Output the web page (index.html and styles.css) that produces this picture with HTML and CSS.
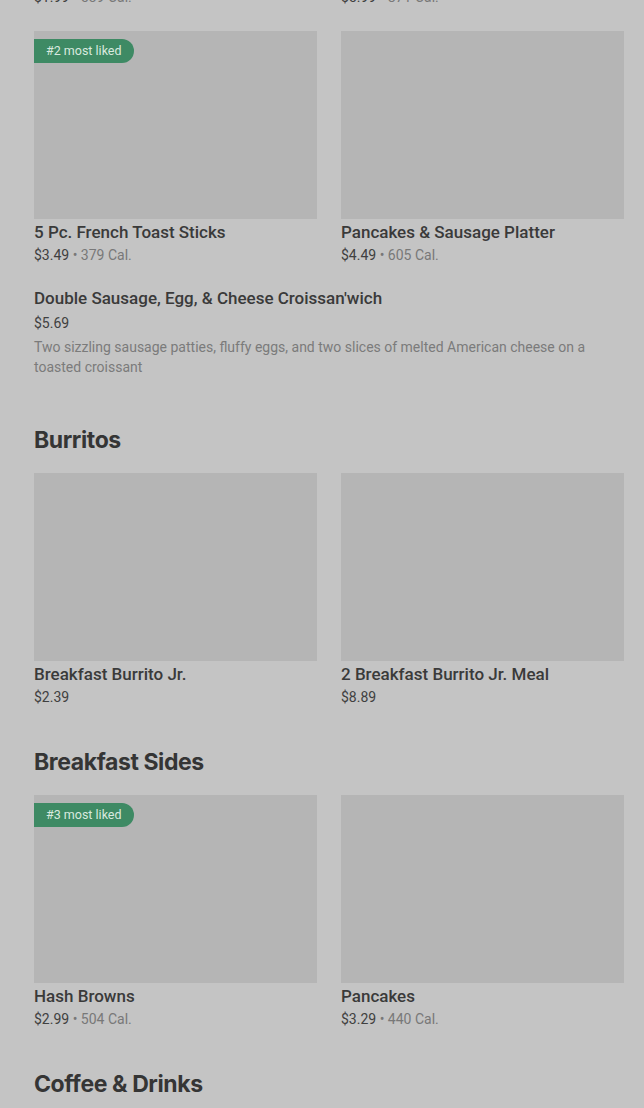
FILE: index.html
```html
<!DOCTYPE html>
<html lang="en">
<head>
    <meta charset="UTF-8">
    <meta name="viewport" content="width=device-width, initial-scale=1.0">
    <title>Breakfast Menu</title>
    <link rel="stylesheet" href="styles.css">
</head>
<body>
    <div class="menu">
        <div class="item-grid">
            <div class="card">
                <div class="card-meta">$1.99 <span class="cal">• 539 Cal.</span></div>
            </div>
            <div class="card">
                <div class="card-meta">$5.99 <span class="cal">• 871 Cal.</span></div>
            </div>

            <div class="card">
                <div class="card-image">
                    <span class="badge">#2 most liked</span>
                </div>
                <div class="card-title">5 Pc. French Toast Sticks</div>
                <div class="card-meta">$3.49 <span class="cal">• 379 Cal.</span></div>
            </div>
            <div class="card">
                <div class="card-image"></div>
                <div class="card-title">Pancakes &amp; Sausage Platter</div>
                <div class="card-meta">$4.49 <span class="cal">• 605 Cal.</span></div>
            </div>
        </div>

        <div class="list-item">
            <div class="list-title">Double Sausage, Egg, &amp; Cheese Croissan'wich</div>
            <div class="list-price">$5.69</div>
            <div class="list-desc">Two sizzling sausage patties, fluffy eggs, and two slices of melted American cheese on a toasted croissant</div>
        </div>

        <!-- Burritos -->
        <div class="section">
            <h2 class="section-title">Burritos</h2>
            <div class="item-grid">
                <div class="card">
                    <div class="card-image"></div>
                    <div class="card-title">Breakfast Burrito Jr.</div>
                    <div class="card-meta">$2.39</div>
                </div>
                <div class="card">
                    <div class="card-image"></div>
                    <div class="card-title">2 Breakfast Burrito Jr. Meal</div>
                    <div class="card-meta">$8.89</div>
                </div>
            </div>
        </div>

        <!-- Breakfast Sides -->
        <div class="section">
            <h2 class="section-title">Breakfast Sides</h2>
            <div class="item-grid">
                <div class="card">
                    <div class="card-image">
                        <span class="badge">#3 most liked</span>
                    </div>
                    <div class="card-title">Hash Browns</div>
                    <div class="card-meta">$2.99 <span class="cal">• 504 Cal.</span></div>
                </div>
                <div class="card">
                    <div class="card-image"></div>
                    <div class="card-title">Pancakes</div>
                    <div class="card-meta">$3.29 <span class="cal">• 440 Cal.</span></div>
                </div>
            </div>
        </div>

        <!-- Coffee & Drinks -->
        <div class="section">
            <h2 class="section-title">Coffee &amp; Drinks</h2>
        </div>
    </div>
</body>
</html>
```

FILE: styles.css
```css
body {
    margin: 0;
    background: #c4c4c4;
    font-family: Roboto, 'Liberation Sans', sans-serif;
    color: #333;
    overflow: hidden;
}

.menu {
    padding: 0 20px 0 34px;
    margin-top: -16px;
}

.item-grid {
    display: grid;
    grid-template-columns: 1fr 1fr;
    column-gap: 24px;
    row-gap: 24px;
}

.card-image {
    position: relative;
    height: 188px;
    background: #b5b5b5;
}

.badge {
    position: absolute;
    top: 8px;
    left: 0;
    height: 24px;
    line-height: 24px;
    padding: 0 12px;
    background: #3e8a64;
    color: #d9e9df;
    font-size: 12.5px;
    border-radius: 0 12px 12px 0;
}

.card-title {
    margin-top: 3px;
    font-size: 17px;
    line-height: 20px;
    font-weight: 500;
    color: #3a3a3a;
}

.card-meta {
    margin-top: 3px;
    font-size: 14px;
    line-height: 20px;
    color: #404040;
}

.cal {
    color: #787878;
}

.list-item {
    margin-top: 23px;
    padding-bottom: 8px;
}

.list-title {
    font-size: 17px;
    line-height: 20px;
    font-weight: 500;
    color: #3a3a3a;
}

.list-price {
    margin-top: 5px;
    font-size: 14px;
    line-height: 20px;
    color: #404040;
}

.list-desc {
    margin-top: 4px;
    font-size: 14px;
    line-height: 20px;
    color: #7b7b7b;
}

.section {
    margin-top: 41px;
}

.section-title {
    margin: 0 0 19px;
    font-family: Inter, 'Liberation Sans', sans-serif;
    font-size: 23px;
    line-height: 28px;
    font-weight: 700;
    letter-spacing: -0.4px;
    color: #353535;
}
```
